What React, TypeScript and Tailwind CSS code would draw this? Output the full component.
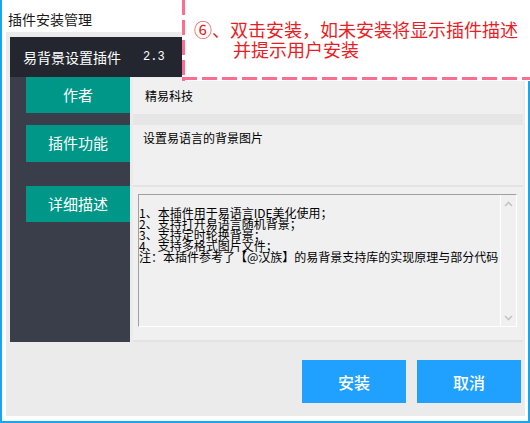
import React from 'react';

const cjk = { fontFamily: '"Noto Sans CJK SC", "Noto Sans", sans-serif' };

const descLines = [
  '1、本插件用于易语言IDE美化使用；',
  '2、支持打开易语言随机背景；',
  '3、支持定时轮换背景；',
  '4、支持多格式图片文件；',
  '注：本插件参考了【@汉族】的易背景支持库的实现原理与部分代码',
];

const SideLabel: React.FC<{ label: string; className?: string }> = ({ label, className }) => (
  <div
    className={`ml-[16px] w-[104px] h-[36px] bg-[#009688] text-white text-[15px] flex items-center justify-center ${className ?? ''}`}
  >
    {label}
  </div>
);

const Callout: React.FC = () => (
  <div className="absolute left-[182px] top-0 w-[360px] h-[81px] bg-white">
    <svg className="absolute inset-0" width="360" height="81">
      <line x1="1.5" y1="0" x2="1.5" y2="81" stroke="#fd6d92" strokeWidth="3" strokeDasharray="15 5" />
      <line x1="0" y1="78.5" x2="360" y2="78.5" stroke="#fd6d92" strokeWidth="3" strokeDasharray="15 5" />
    </svg>
    <div className="relative pl-[12px] pt-[19px] text-[18px] leading-[20px] text-[#ea1c24] whitespace-nowrap">
      <div>⑥、双击安装，如未安装将显示插件描述</div>
      <div className="pl-[39px]">并提示用户安装</div>
    </div>
  </div>
);

export default function App() {
  return (
    <div className="relative w-[530px] h-[423px] bg-white overflow-hidden" style={cjk}>
      <div className="w-[530px] h-[423px] border-l-2 border-r-2 border-b-2 border-[#19a7ec] flex flex-col">
        <div className="h-[32px] pl-[6px] pt-[9px] text-[14px] leading-[20px] text-[#1a1a1a]">插件安装管理</div>
        <div className="ml-[4px] mr-[3px] h-[384px] bg-[#ebebeb] pl-[4px] pr-[2px] pt-[5px] flex flex-col">
          <div className="h-[40px] bg-[#23262e] flex items-center pl-[13px] text-white">
            <span className="text-[14px]">易背景设置插件</span>
            <span className="ml-[22px] text-[12px]" style={{ fontFamily: '"Liberation Mono", monospace' }}>
              2.3
            </span>
          </div>
          <div className="flex gap-[3px]">
            <div className="w-[120px] h-[265px] bg-[#3a3e4a] flex flex-col">
              <SideLabel label="作者" />
              <SideLabel label="插件功能" className="mt-[12px] h-[37px]" />
              <SideLabel label="详细描述" className="mt-[24px]" />
            </div>
            <div className="flex-1 flex flex-col pt-[1px]">
              <div className="h-[36px] bg-[#f0f0f0] flex items-center pl-[12px] text-[12px] text-black">精易科技</div>
              <div className="h-[11px] bg-[#e6e6e6]" />
              <div className="h-[60px] bg-[#f0f0f0] pl-[10px] pt-[6px] text-[12px] leading-[14px] text-black">
                设置易语言的背景图片
              </div>
              <div className="h-[2px] bg-[#e3e3e3]" />
              <div className="h-[153px] bg-[#f0f0f0] pl-[5px] pr-[6px] pt-[7px]">
                <div className="h-[133px] flex border-t border-l border-[#a0a0a0] border-b-white border-r-white border-b border-r">
                  <div className="flex-1 pt-[12px] text-[12px] leading-[11px] text-black whitespace-nowrap overflow-hidden">
                    {descLines.map((line) => (
                      <div key={line}>{line}</div>
                    ))}
                  </div>
                  <div className="w-[16px] border-l border-white flex flex-col items-center justify-between pt-[6px] pb-[5px]">
                    <svg width="9" height="6" viewBox="0 0 9 6">
                      <path d="M1 5 L4.5 1.5 L8 5" fill="none" stroke="#c4c4c4" strokeWidth="1.6" />
                    </svg>
                    <svg width="9" height="6" viewBox="0 0 9 6">
                      <path d="M1 1 L4.5 4.5 L8 1" fill="none" stroke="#c4c4c4" strokeWidth="1.6" />
                    </svg>
                  </div>
                </div>
              </div>
              <div className="h-[2px] bg-[#e3e3e3]" />
            </div>
          </div>
          <div className="flex justify-end gap-[11px] mt-[18px] pr-[2px]">
            <button className="w-[104px] h-[43px] bg-[#20a0ff] text-white text-[16px] font-medium">安装</button>
            <button className="w-[104px] h-[43px] bg-[#20a0ff] text-white text-[16px] font-medium">取消</button>
          </div>
        </div>
      </div>
      <Callout />
    </div>
  );
}
